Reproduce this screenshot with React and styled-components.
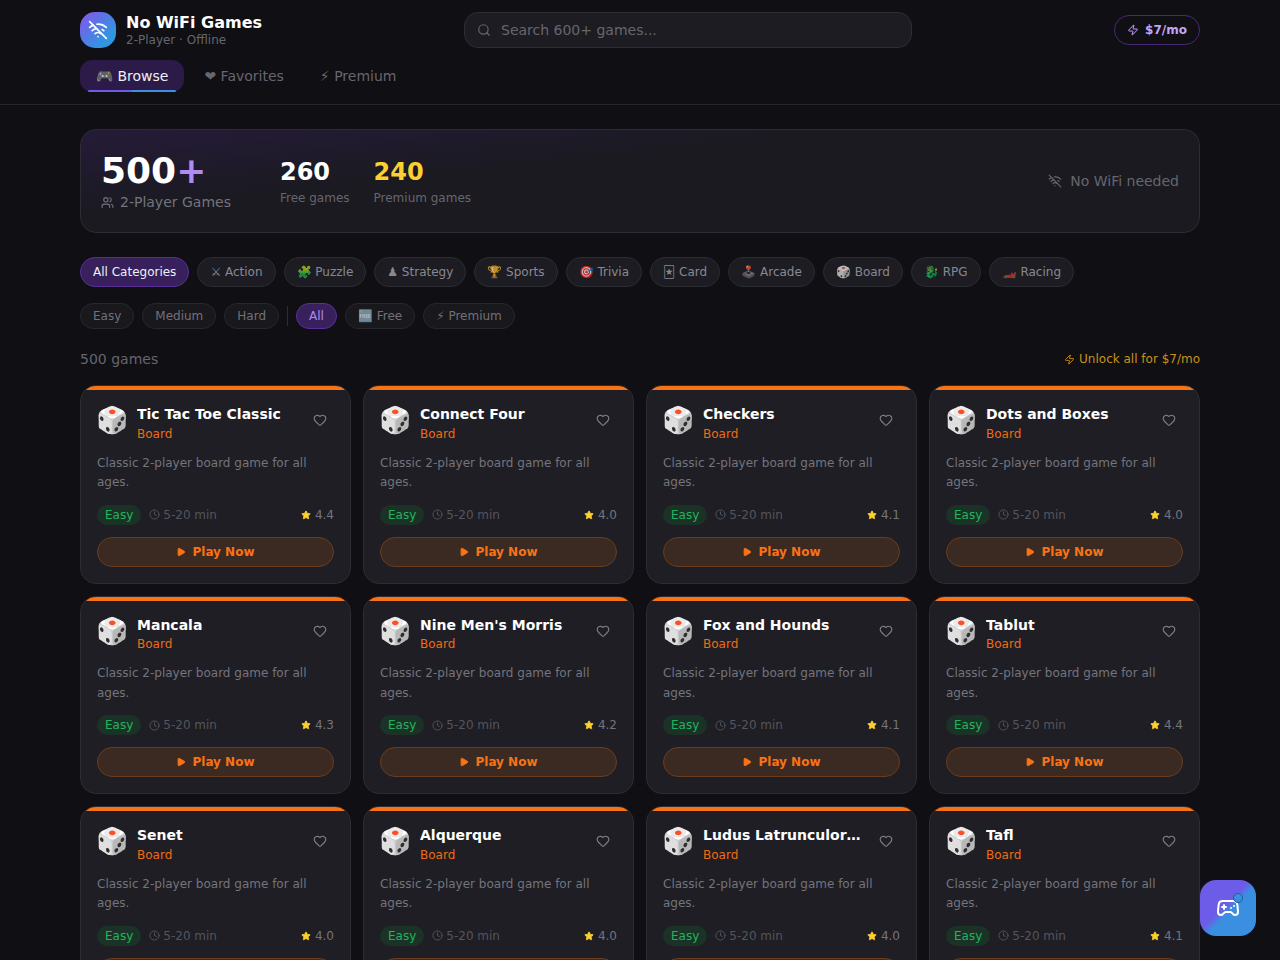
import React from "react";
import styled, { createGlobalStyle } from "styled-components";
import { Clock, Gamepad2, Heart, Play, Search, Star, Users, WifiOff, Zap } from "lucide-react";

const categories = ["All Categories", "⚔ Action", "🧩 Puzzle", "♟ Strategy", "🏆 Sports", "🎯 Trivia", "🃏 Card", "🕹️ Arcade", "🎲 Board", "🐉 RPG", "🏎️ Racing"];

const games = [
  { title: "Tic Tac Toe Classic", rating: "4.4" },
  { title: "Connect Four", rating: "4.0" },
  { title: "Checkers", rating: "4.1" },
  { title: "Dots and Boxes", rating: "4.0" },
  { title: "Mancala", rating: "4.3" },
  { title: "Nine Men's Morris", rating: "4.2" },
  { title: "Fox and Hounds", rating: "4.1" },
  { title: "Tablut", rating: "4.4" },
  { title: "Senet", rating: "4.0" },
  { title: "Alquerque", rating: "4.0" },
  { title: "Ludus Latrunculorum", rating: "4.0" },
  { title: "Tafl", rating: "4.1" },
];

const GlobalStyle = createGlobalStyle`
  * {
    box-sizing: border-box;
  }
  html,
  body {
    margin: 0;
    background: #0f0f14;
    color: #fff;
    font-family: "DejaVu Sans", sans-serif;
    scrollbar-width: none;
  }
`;

const Header = styled.header`
  height: 105px;
  padding: 12px 80px 0;
  border-bottom: 1px solid #26262c;
`;

const TopRow = styled.div`
  display: flex;
  align-items: center;
  justify-content: space-between;
  height: 36px;
`;

const Brand = styled.div`
  display: flex;
  align-items: center;
  gap: 10px;
  width: 182px;
  white-space: nowrap;
`;

const LogoMark = styled.div`
  width: 36px;
  height: 36px;
  flex: none;
  border-radius: 15px;
  background: linear-gradient(135deg, #7c5ce8 10%, #2f96e0 75%);
  display: flex;
  align-items: center;
  justify-content: center;
`;

const BrandName = styled.div`
  font-size: 16px;
  font-weight: 700;
  line-height: 20px;
`;

const BrandSub = styled.div`
  font-size: 12px;
  line-height: 14px;
  color: #66666e;
`;

const SearchBox = styled.label`
  width: 448px;
  height: 36px;
  display: flex;
  align-items: center;
  gap: 8px;
  padding: 0 12px;
  background: #1c1c22;
  border: 1px solid #2e2e35;
  border-radius: 14px;
  color: #66666e;
`;

const SearchInput = styled.input`
  flex: 1;
  min-width: 0;
  background: none;
  border: none;
  outline: none;
  color: #fff;
  font: 14px "DejaVu Sans", sans-serif;

  &::placeholder {
    color: #66666e;
    opacity: 1;
  }
`;

const PriceButton = styled.button`
  height: 30px;
  width: 86px;
  display: flex;
  align-items: center;
  justify-content: center;
  gap: 6px;
  background: none;
  border: 1px solid #4a2a78;
  border-radius: 15px;
  color: #c4a5f5;
  font: 700 12px "DejaVu Sans", sans-serif;
`;

const Nav = styled.nav`
  display: flex;
  gap: 4px;
  margin-top: 12px;
`;

const NavTab = styled.div`
  position: relative;
  height: 32px;
  padding: 0 16px;
  display: flex;
  align-items: center;
  border-radius: 12px;
  font-size: 14px;
  color: ${(p) => (p.$active ? "#f0f0f5" : "#66666e")};
  background: ${(p) => (p.$active ? "#2c1a48" : "transparent")};

  ${(p) =>
    p.$active &&
    `&::after {
      content: "";
      position: absolute;
      left: 8px;
      right: 8px;
      bottom: 0;
      height: 2px;
      border-radius: 1px;
      background: linear-gradient(90deg, #6c5ce7 50%, #3b8fe0 50%);
    }`}
`;

const Main = styled.main`
  padding: 24px 80px 40px;
`;

const Hero = styled.section`
  height: 104px;
  padding: 0 20px;
  display: flex;
  align-items: center;
  gap: 24px;
  border: 1px solid #2c2c33;
  border-radius: 16px;
  background: linear-gradient(174deg, #251b38 0%, #1a1a20 40%, #1a1a20 100%);
`;

const HeroMain = styled.div`
  margin-right: 25px;
  padding-top: 1px;
`;

const HeroCount = styled.div`
  font-size: 36px;
  font-weight: 700;
  line-height: 40px;

  span {
    color: #b18cf0;
  }
`;

const HeroLabel = styled.div`
  display: flex;
  align-items: center;
  gap: 6px;
  font-size: 14px;
  line-height: 20px;
  color: #74747c;
  margin-top: 1px;
`;

const StatValue = styled.div`
  font-size: 24px;
  font-weight: 700;
  line-height: 32px;
  color: ${(p) => p.$color || "#fff"};
`;

const StatLabel = styled.div`
  font-size: 12px;
  line-height: 16px;
  color: #66666e;
  margin-top: 2px;
`;

const HeroNote = styled.div`
  margin-left: auto;
  display: flex;
  align-items: center;
  gap: 8px;
  font-size: 14px;
  color: #66666e;
`;

const ChipRow = styled.div`
  display: flex;
  align-items: center;
  gap: 8px;
  margin-top: ${(p) => p.$top}px;
`;

const Chip = styled.div`
  height: ${(p) => (p.$small ? 26 : 30)}px;
  padding: 0 12px;
  display: flex;
  align-items: center;
  border-radius: 15px;
  font-size: 12px;
  white-space: nowrap;
  border: 1px solid ${(p) => (p.$active ? "#5b2f9a" : p.$small ? "#27272d" : "#2c2c33")};
  background: ${(p) => (p.$active ? "#37205c" : p.$small ? "#18181d" : "#1c1c22")};
  color: ${(p) => (p.$active ? p.$activeColor || "#f0f0f5" : p.$small ? "#8f8f98" : "#adadb6")};
`;

const ChipLabel = styled.span`
  opacity: ${(p) => (p.$dim ? 0.75 : 1)};
`;

const Divider = styled.div`
  width: 1px;
  height: 20px;
  background: #2c2c33;
`;

const ResultBar = styled.div`
  display: flex;
  align-items: center;
  justify-content: space-between;
  height: 20px;
  margin-top: 20px;
`;

const ResultCount = styled.div`
  font-size: 14px;
  color: #66666e;
`;

const UnlockLink = styled.div`
  display: flex;
  align-items: center;
  gap: 4px;
  font-size: 12px;
  color: #c8921a;
`;

const Grid = styled.div`
  display: grid;
  grid-template-columns: repeat(4, 1fr);
  gap: 12px;
  margin-top: 16px;
`;

const Card = styled.article`
  position: relative;
  overflow: hidden;
  height: 198.5px;
  padding: 20px 16px 16px;
  background: #1e1e24;
  border: 1px solid #2c2c33;
  border-radius: 16px;

  &::before {
    content: "";
    position: absolute;
    top: 0;
    left: 0;
    right: 0;
    height: 4px;
    background: #f97316;
  }
`;

const CardHead = styled.div`
  display: flex;
  align-items: flex-start;
  gap: 11px;
  margin-top: -2px;
`;

const CardEmoji = styled.div`
  font-size: 26px;
  width: 29px;
  margin-left: -1px;
  margin-right: 1px;
  line-height: 32px;
  flex: none;
`;

const CardTitles = styled.div`
  flex: 1;
  min-width: 0;
`;

const CardTitle = styled.div`
  font-size: 14px;
  font-weight: 700;
  line-height: 20px;
  white-space: nowrap;
  overflow: hidden;
  text-overflow: ellipsis;
`;

const CardCategory = styled.div`
  font-size: 12px;
  line-height: 16px;
  margin-top: 1.75px;
  color: #ee6c12;
`;

const FavButton = styled.div`
  flex: none;
  width: 28px;
  height: 28px;
  display: flex;
  align-items: center;
  justify-content: center;
  color: #7c7c84;
  margin-top: 2px;
`;

const CardText = styled.p`
  margin: 11.75px 0 0;
  font-size: 12px;
  line-height: 19.5px;
  color: #74747c;
`;

const CardMeta = styled.div`
  display: flex;
  align-items: center;
  gap: 8px;
  margin-top: 12.25px;
  font-size: 12px;
  color: #55555d;
`;

const LevelTag = styled.span`
  height: 20px;
  padding: 0 8px;
  display: flex;
  align-items: center;
  border-radius: 10px;
  background: #1b3327;
  color: #22b35e;
`;

const MetaItem = styled.span`
  display: flex;
  align-items: center;
  gap: ${(p) => (p.$push ? 4 : 3)}px;
  margin-left: ${(p) => (p.$push ? "auto" : 0)};
  color: ${(p) => (p.$push ? "#74747c" : "#55555d")};
`;

const PlayButton = styled.button`
  width: 100%;
  height: 30px;
  margin-top: 12px;
  display: flex;
  align-items: center;
  justify-content: center;
  gap: 6px;
  background: #3b2a22;
  border: 1px solid #6c3d1c;
  border-radius: 15px;
  color: #f97316;
  font: 700 12px "DejaVu Sans", sans-serif;
`;

const Fab = styled.button`
  position: fixed;
  right: 24px;
  bottom: 24px;
  width: 56px;
  height: 56px;
  display: flex;
  align-items: center;
  justify-content: center;
  border: none;
  border-radius: 16px;
  background: linear-gradient(135deg, #6c5ce7 45%, #3b8fe0 55%);
  color: #fff;
`;

const FabDot = styled.span`
  position: absolute;
  top: 13px;
  right: 13px;
  width: 10px;
  height: 10px;
  border-radius: 50%;
  background: #3b8fe0;
  border: 1px solid #1d5f8c;
`;

function GameCard({ game }) {
  return (
    <Card>
      <CardHead>
        <CardEmoji>🎲</CardEmoji>
        <CardTitles>
          <CardTitle>{game.title}</CardTitle>
          <CardCategory>Board</CardCategory>
        </CardTitles>
        <FavButton>
          <Heart size={14} />
        </FavButton>
      </CardHead>
      <CardText>Classic 2-player board game for all ages.</CardText>
      <CardMeta>
        <LevelTag>Easy</LevelTag>
        <MetaItem>
          <Clock size={11} />
          5-20 min
        </MetaItem>
        <MetaItem $push>
          <Star size={10} fill="#fbd030" color="#fbd030" />
          {game.rating}
        </MetaItem>
      </CardMeta>
      <PlayButton>
        <Play size={10} fill="#f97316" />
        Play Now
      </PlayButton>
    </Card>
  );
}

export default function App() {
  return (
    <>
      <GlobalStyle />
      <Header>
        <TopRow>
          <Brand>
            <LogoMark>
              <WifiOff size={20} color="#fff" />
            </LogoMark>
            <div>
              <BrandName>No WiFi Games</BrandName>
              <BrandSub>2-Player · Offline</BrandSub>
            </div>
          </Brand>
          <SearchBox>
            <Search size={14} />
            <SearchInput placeholder="Search 600+ games..." />
          </SearchBox>
          <PriceButton>
            <Zap size={12} />
            $7/mo
          </PriceButton>
        </TopRow>
        <Nav>
          <NavTab $active>🎮 Browse</NavTab>
          <NavTab>❤ Favorites</NavTab>
          <NavTab>⚡︎ Premium</NavTab>
        </Nav>
      </Header>
      <Main>
        <Hero>
          <HeroMain>
            <HeroCount>
              500<span>+</span>
            </HeroCount>
            <HeroLabel>
              <Users size={13} />
              2-Player Games
            </HeroLabel>
          </HeroMain>
          <div>
            <StatValue>260</StatValue>
            <StatLabel>Free games</StatLabel>
          </div>
          <div>
            <StatValue $color="#fbd030">240</StatValue>
            <StatLabel>Premium games</StatLabel>
          </div>
          <HeroNote>
            <WifiOff size={14} />
            No WiFi needed
          </HeroNote>
        </Hero>
        <ChipRow $top={24}>
          {categories.map((c, i) => (
            <Chip key={c} $active={i === 0}>
              <ChipLabel $dim={i !== 0}>{c}</ChipLabel>
            </Chip>
          ))}
        </ChipRow>
        <ChipRow $top={16}>
          <Chip $small>
            <ChipLabel $dim>Easy</ChipLabel>
          </Chip>
          <Chip $small>
            <ChipLabel $dim>Medium</ChipLabel>
          </Chip>
          <Chip $small>
            <ChipLabel $dim>Hard</ChipLabel>
          </Chip>
          <Divider />
          <Chip $small $active $activeColor="#b18cf0">
            All
          </Chip>
          <Chip $small>
            <ChipLabel $dim>🆓 Free</ChipLabel>
          </Chip>
          <Chip $small>
            <ChipLabel $dim>⚡︎ Premium</ChipLabel>
          </Chip>
        </ChipRow>
        <ResultBar>
          <ResultCount>500 games</ResultCount>
          <UnlockLink>
            <Zap size={11} />
            Unlock all for $7/mo
          </UnlockLink>
        </ResultBar>
        <Grid>
          {games.map((g) => (
            <GameCard key={g.title} game={g} />
          ))}
        </Grid>
      </Main>
      <Fab>
        <Gamepad2 size={24} />
        <FabDot />
      </Fab>
    </>
  );
}
